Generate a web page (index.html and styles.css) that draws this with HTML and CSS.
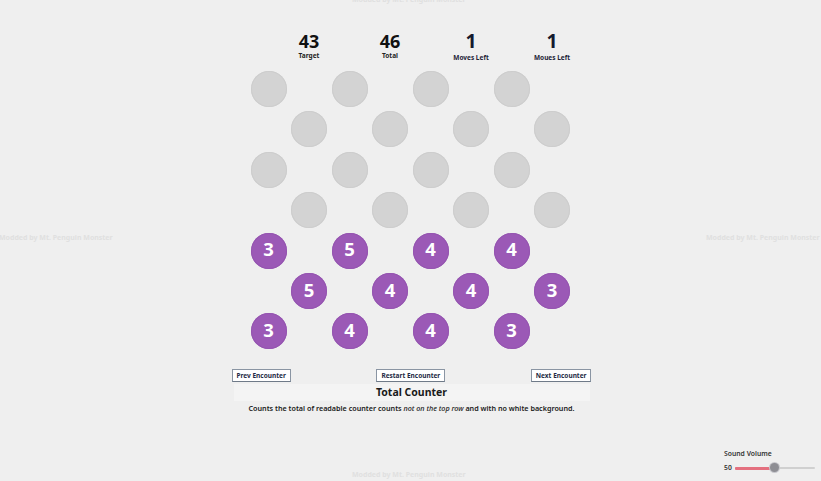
FILE: index.html
```html
<!DOCTYPE html>
<html>
<head>
<meta charset="utf-8">
<link rel="stylesheet" href="styles.css">
</head>
<body>
<div class="wm wm-top">Modded by Mt. Penguin Monster</div>
<div class="wm wm-left">Modded by Mt. Penguin Monster</div>
<div class="wm wm-right">Modded by Mt. Penguin Monster</div>
<div class="wm wm-bottom">Modded by Mt. Penguin Monster</div>

<main class="page">
  <div class="stats">
    <div class="stat"><div class="num">43</div><div class="lbl">Target</div></div>
    <div class="stat"><div class="num">46</div><div class="lbl">Total</div></div>
    <div class="stat moves"><div class="num">1</div><div class="lbl">Moves Left</div></div>
    <div class="stat moves"><div class="num">1</div><div class="lbl">Moues Left</div></div>
  </div>

  <div class="board">
    <div class="row"><span class="dot"></span><span class="dot"></span><span class="dot"></span><span class="dot"></span></div>
    <div class="row shift"><span class="dot"></span><span class="dot"></span><span class="dot"></span><span class="dot"></span></div>
    <div class="row"><span class="dot"></span><span class="dot"></span><span class="dot"></span><span class="dot"></span></div>
    <div class="row shift"><span class="dot"></span><span class="dot"></span><span class="dot"></span><span class="dot"></span></div>
    <div class="row"><span class="dot on">3</span><span class="dot on">5</span><span class="dot on">4</span><span class="dot on">4</span></div>
    <div class="row shift"><span class="dot on">5</span><span class="dot on">4</span><span class="dot on">4</span><span class="dot on">3</span></div>
    <div class="row"><span class="dot on">3</span><span class="dot on">4</span><span class="dot on">4</span><span class="dot on">3</span></div>
  </div>

  <div class="buttons">
    <button class="btn">Prev Encounter</button>
    <button class="btn">Restart Encounter</button>
    <button class="btn">Next Encounter</button>
  </div>

  <div class="panel">Total Counter</div>
  <p class="desc">Counts the total of readable counter counts <em>not on the top row</em> and with no white background.</p>
</main>

<div class="volume">
  <div class="vol-title">Sound Volume</div>
  <div class="vol-row">
    <span class="vol-val">50</span>
    <div class="slider"><div class="fill"></div><div class="thumb"></div></div>
  </div>
</div>
</body>
</html>
```

FILE: styles.css
```css
html, body {
  margin: 0;
  padding: 0;
}
body {
  background: #efefef;
  font-family: "Noto Sans", "Open Sans", sans-serif;
  color: #111;
  width: 821px;
  height: 481px;
  overflow: hidden;
  position: relative;
}

.wm {
  position: absolute;
  font-size: 7px;
  font-weight: 700;
  color: #e0e0e0;
  white-space: nowrap;
  line-height: 10px;
}
.wm-top { top: -5px; left: 352px; }
.wm-left { top: 233px; left: -1px; }
.wm-right { top: 233px; left: 706px; }
.wm-bottom { top: 470px; left: 352px; }

.page {
  width: 360px;
  margin: 0 auto;
  padding-top: 32px;
  display: flex;
  flex-direction: column;
  align-items: center;
  position: relative;
  left: 1px;
}

.stats {
  display: flex;
  width: 324px;
  padding-left: 20px;
  box-sizing: border-box;
  margin-left: -2px;
}
.stat {
  flex: 0 0 81px;
  display: flex;
  flex-direction: column;
  align-items: center;
}
.num {
  font-size: 18px;
  font-weight: 700;
  line-height: 18px;
  height: 18px;
}
.lbl {
  font-size: 6.5px;
  font-weight: 700;
  line-height: 8px;
  margin-top: 2px;
  color: #222;
  white-space: nowrap;
}
.moves .num {
  font-size: 19.5px;
  color: #151a2e;
}
.moves .lbl {
  margin-top: 4px;
  color: #1c2236;
}

.board {
  width: 324px;
  margin-top: 9px;
  margin-left: -2px;
  display: flex;
  flex-direction: column;
  gap: 4.4px;
}
.row {
  display: flex;
  gap: 45px;
  padding-left: 2px;
}
.row.shift {
  padding-left: 42.5px;
}
.dot {
  width: 36px;
  height: 36px;
  border-radius: 50%;
  background: #d3d3d3;
  box-shadow: inset 0 0 0 1px #cdcdcd;
  display: flex;
  align-items: center;
  justify-content: center;
  box-sizing: border-box;
  font-size: 18.5px;
  font-weight: 700;
  color: #fff;
  line-height: 1;
}
.dot.on {
  background: #9b59b6;
  box-shadow: inset 0 0 0 1px #9555b0;
  padding-bottom: 2px;
}

.buttons {
  width: 360px;
  display: flex;
  justify-content: space-between;
  margin-top: 20px;
}
.btn {
  font-family: "Noto Sans", sans-serif;
  font-size: 6.5px;
  font-weight: 700;
  color: #1e2a44;
  background: #fff;
  border: 1px solid #8a95a3;
  border-bottom-color: #6f7a88;
  height: 13px;
  padding: 0 4px;
  line-height: 10px;
  margin: 0;
  white-space: nowrap;
}

.panel {
  width: 356px;
  margin-top: 2px;
  height: 17px;
  background: #f4f4f4;
  font-size: 10.5px;
  font-weight: 700;
  line-height: 17px;
  text-align: center;
  color: #1a1a1a;
}
.desc {
  margin: 2px 0 0;
  font-size: 7.2px;
  font-weight: 600;
  line-height: 10px;
  color: #1a1a1a;
  text-align: center;
  white-space: nowrap;
}
.desc em {
  font-weight: 500;
}

.volume {
  position: absolute;
  left: 724px;
  top: 449px;
}
.vol-title {
  font-size: 6.8px;
  font-weight: 600;
  color: #333;
  line-height: 10px;
}
.vol-row {
  display: flex;
  align-items: center;
  gap: 2px;
  margin-top: 4px;
}
.vol-val {
  font-size: 6.8px;
  font-weight: 600;
  color: #333;
  line-height: 10px;
  width: 9px;
}
.slider {
  position: relative;
  width: 80px;
  height: 2px;
  background: #d0d0d0;
  border-radius: 1px;
}
.fill {
  width: 37px;
  height: 3px;
  margin-top: -0.5px;
  background: #e4707f;
  border-radius: 1px;
}
.thumb {
  position: absolute;
  left: 35px;
  top: -4px;
  width: 9px;
  height: 9px;
  border-radius: 50%;
  background: #8e8e94;
  box-shadow: 0 0 0 1px #c7c7cc;
}
```
